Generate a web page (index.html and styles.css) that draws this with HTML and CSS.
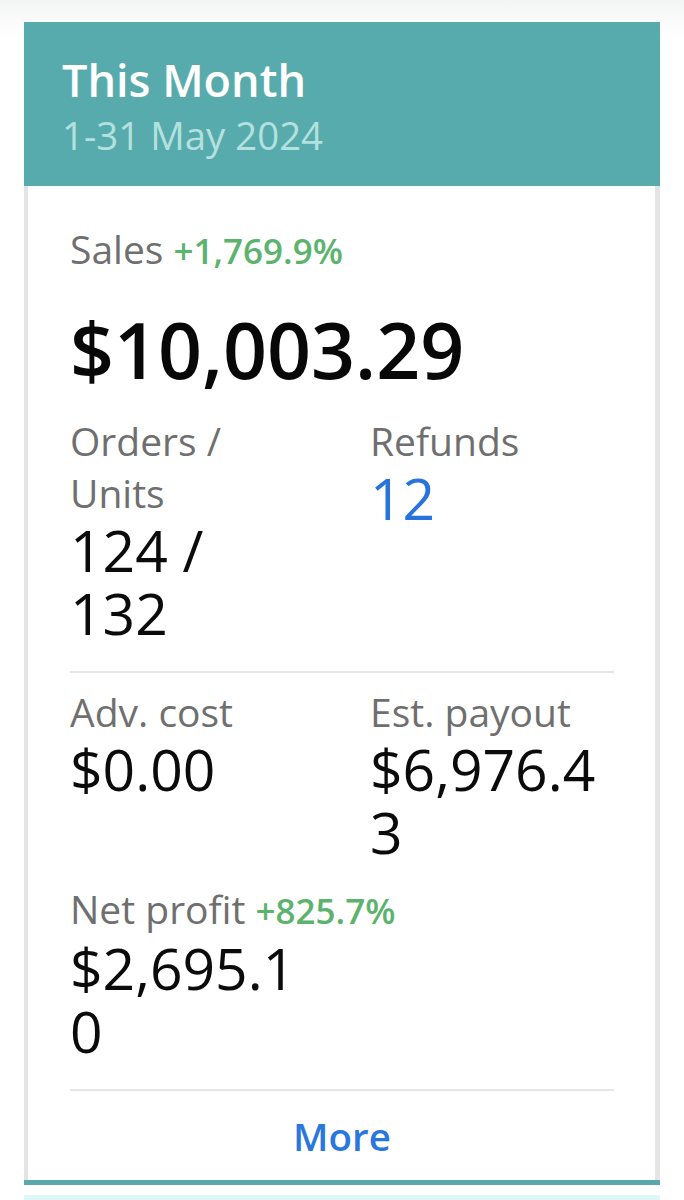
FILE: index.html
```html
<!DOCTYPE html>
<html lang="en">
<head>
<meta charset="utf-8">
<title>This Month</title>
<link rel="stylesheet" href="styles.css">
</head>
<body>
<div class="page">
  <section class="card">
    <header class="card-head">
      <h1 class="title">This Month</h1>
      <div class="range">1-31 May 2024</div>
    </header>
    <div class="card-body">
      <div class="section">
        <div class="sales-label">Sales <span class="delta">+1,769.9%</span></div>
        <div class="big-value">$10,003.29</div>
        <div class="stats">
          <div class="stat">
            <div class="label">Orders / Units</div>
            <div class="value">124 / 132</div>
          </div>
          <div class="stat">
            <div class="label">Refunds</div>
            <div class="value blue">12</div>
          </div>
        </div>
      </div>
      <div class="divider"></div>
      <div class="section section-mid">
        <div class="stats">
          <div class="stat">
            <div class="label">Adv. cost</div>
            <div class="value">$0.00</div>
          </div>
          <div class="stat">
            <div class="label">Est. payout</div>
            <div class="value">$6,976.43</div>
          </div>
          <div class="stat stat-wide">
            <div class="label nowrap">Net profit <span class="delta">+825.7%</span></div>
            <div class="value narrow">$2,695.10</div>
          </div>
        </div>
      </div>
      <div class="divider"></div>
      <div class="more">More</div>
    </div>
  </section>
  <div class="next-card"></div>
</div>
</body>
</html>
```

FILE: styles.css
```css
html, body {
  margin: 0;
  padding: 0;
}
body {
  background: linear-gradient(#f3f4f4 0, #fbfbfb 22px, #ffffff 40px);
  font-family: "Open Sans", "Noto Sans", sans-serif;
  color: #0b0b0b;
  width: 684px;
  height: 1200px;
  overflow: hidden;
}
.page {
  padding-top: 22px;
  padding-left: 24px;
  width: 636px;
}
.card {
  width: 636px;
  background: #ffffff;
  border-bottom: 5px solid #58a9a9;
}
.card-head {
  background: #58abac;
  padding: 29px 20px 25px 38px;
}
.title {
  margin: 0;
  font-size: 45px;
  line-height: 57px;
  font-weight: 600;
  color: #ffffff;
}
.range {
  margin-top: 1px;
  font-size: 38.4px;
  line-height: 52px;
  color: #b3e1df;
}
.card-body {
  border-left: 4px solid #e4e4e4;
  border-right: 5px solid #e4e4e4;
  padding: 0 41px 0 42px;
}
.section {
  padding: 37px 0 36px;
}
.section-mid {
  padding-top: 13px;
}
.sales-label {
  font-size: 39px;
  line-height: 52px;
  color: #6f6f6f;
}
.delta {
  font-size: 35px;
  font-weight: 600;
  color: #5cb36d;
}
.big-value {
  margin-top: 28px;
  margin-bottom: 20px;
  font-size: 77px;
  line-height: 90px;
  font-weight: 600;
  color: #080808;
}
.stats {
  display: grid;
  grid-template-columns: 236px 236px;
  column-gap: 64px;
  row-gap: 29px;
}
.stat-wide {
  grid-column: 1 / -1;
}
.label {
  font-size: 39px;
  line-height: 52px;
  color: #6f6f6f;
}
.nowrap {
  white-space: nowrap;
}
.value {
  font-size: 57px;
  line-height: 63px;
  margin-bottom: -10px;
  overflow-wrap: anywhere;
  color: #0b0b0b;
}
.value.narrow {
  width: 236px;
}
.value.blue {
  color: #2775dc;
}
.divider {
  height: 2px;
  background: #e6e6e6;
}
.more {
  padding: 19px 0 18px;
  text-align: center;
  font-size: 38.5px;
  line-height: 52px;
  font-weight: 600;
  color: #2a77dd;
}
.next-card {
  margin-top: 10px;
  width: 636px;
  height: 6px;
  background: #def8f8;
}
```
